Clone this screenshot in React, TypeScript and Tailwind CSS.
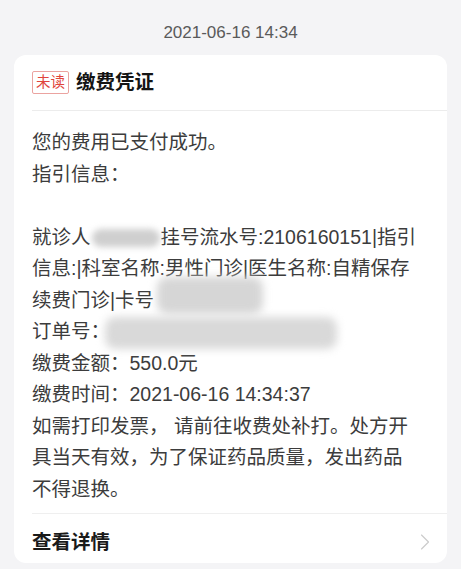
import { ChevronRight } from 'lucide-react';

const font = 'font-["Liberation_Sans","Noto_Sans_CJK_SC",sans-serif]';

const App = () => {
  return (
    <div className={`min-h-[569px] w-[461px] bg-[#f4f4f6] ${font}`}>
      <div className="pt-[22px] pb-[11px] text-center text-[17px] leading-[22px] text-[#5a5a5a]">
        2021-06-16 14:34
      </div>

      <div className="mx-[14px] overflow-hidden rounded-[12px] bg-white">
        {/* header */}
        <div className="ml-[18px] flex h-[56px] items-center gap-[7px] border-b border-[#ececec]">
          <span className="flex h-[23px] items-center rounded-[2px] border border-[#eba3a0] px-[3px] text-[14.5px] leading-none text-[#e0443c]">
            未读
          </span>
          <span className="text-[19.5px] font-bold text-[#141414]">缴费凭证</span>
        </div>

        {/* body */}
        <div className="px-[18px] pt-[16px] pb-[8px] text-[19.5px] leading-[31.5px] text-[#3c3c3c]">
          <div>您的费用已支付成功。</div>
          <div>指引信息：</div>
          <div>&nbsp;</div>
          <div className="whitespace-nowrap">
            就诊人
            <span className="mx-[1px] inline-block h-[18px] w-[68px] rounded-full bg-[#cfcfcf] align-middle blur-[3px]" />
            挂号流水号:2106160151|指引
          </div>
          <div className="whitespace-nowrap">信息:|科室名称:男性门诊|医生名称:自精保存</div>
          <div className="relative whitespace-nowrap">
            续费门诊|卡号
            <span className="absolute left-[125px] top-[-8px] h-[37px] w-[106px] rounded-[10px] bg-[#d6d6d6] blur-[4px]" />
          </div>
          <div className="relative whitespace-nowrap">
            订单号：
            <span className="absolute left-[73px] top-[1px] h-[32px] w-[232px] rounded-[10px] bg-[#d9d9d9] blur-[4px]" />
          </div>
          <div>缴费金额：550.0元</div>
          <div>缴费时间：2021-06-16 14:34:37</div>
          <div className="whitespace-nowrap">如需打印发票， 请前往收费处补打。处方开</div>
          <div className="whitespace-nowrap">具当天有效，为了保证药品质量，发出药品</div>
          <div>不得退换。</div>
        </div>

        {/* footer */}
        <div className="ml-[18px] flex items-center justify-between border-t border-[#efefef] pt-[16px] pb-[9px] pr-[8px]">
          <span className="text-[19.5px] font-bold leading-[24px] text-[#1a1a1a]">查看详情</span>
          <ChevronRight size={28} strokeWidth={1} color="#cccccc" className="-my-[2px]" />
        </div>
      </div>
    </div>
  );
};

export default App;
